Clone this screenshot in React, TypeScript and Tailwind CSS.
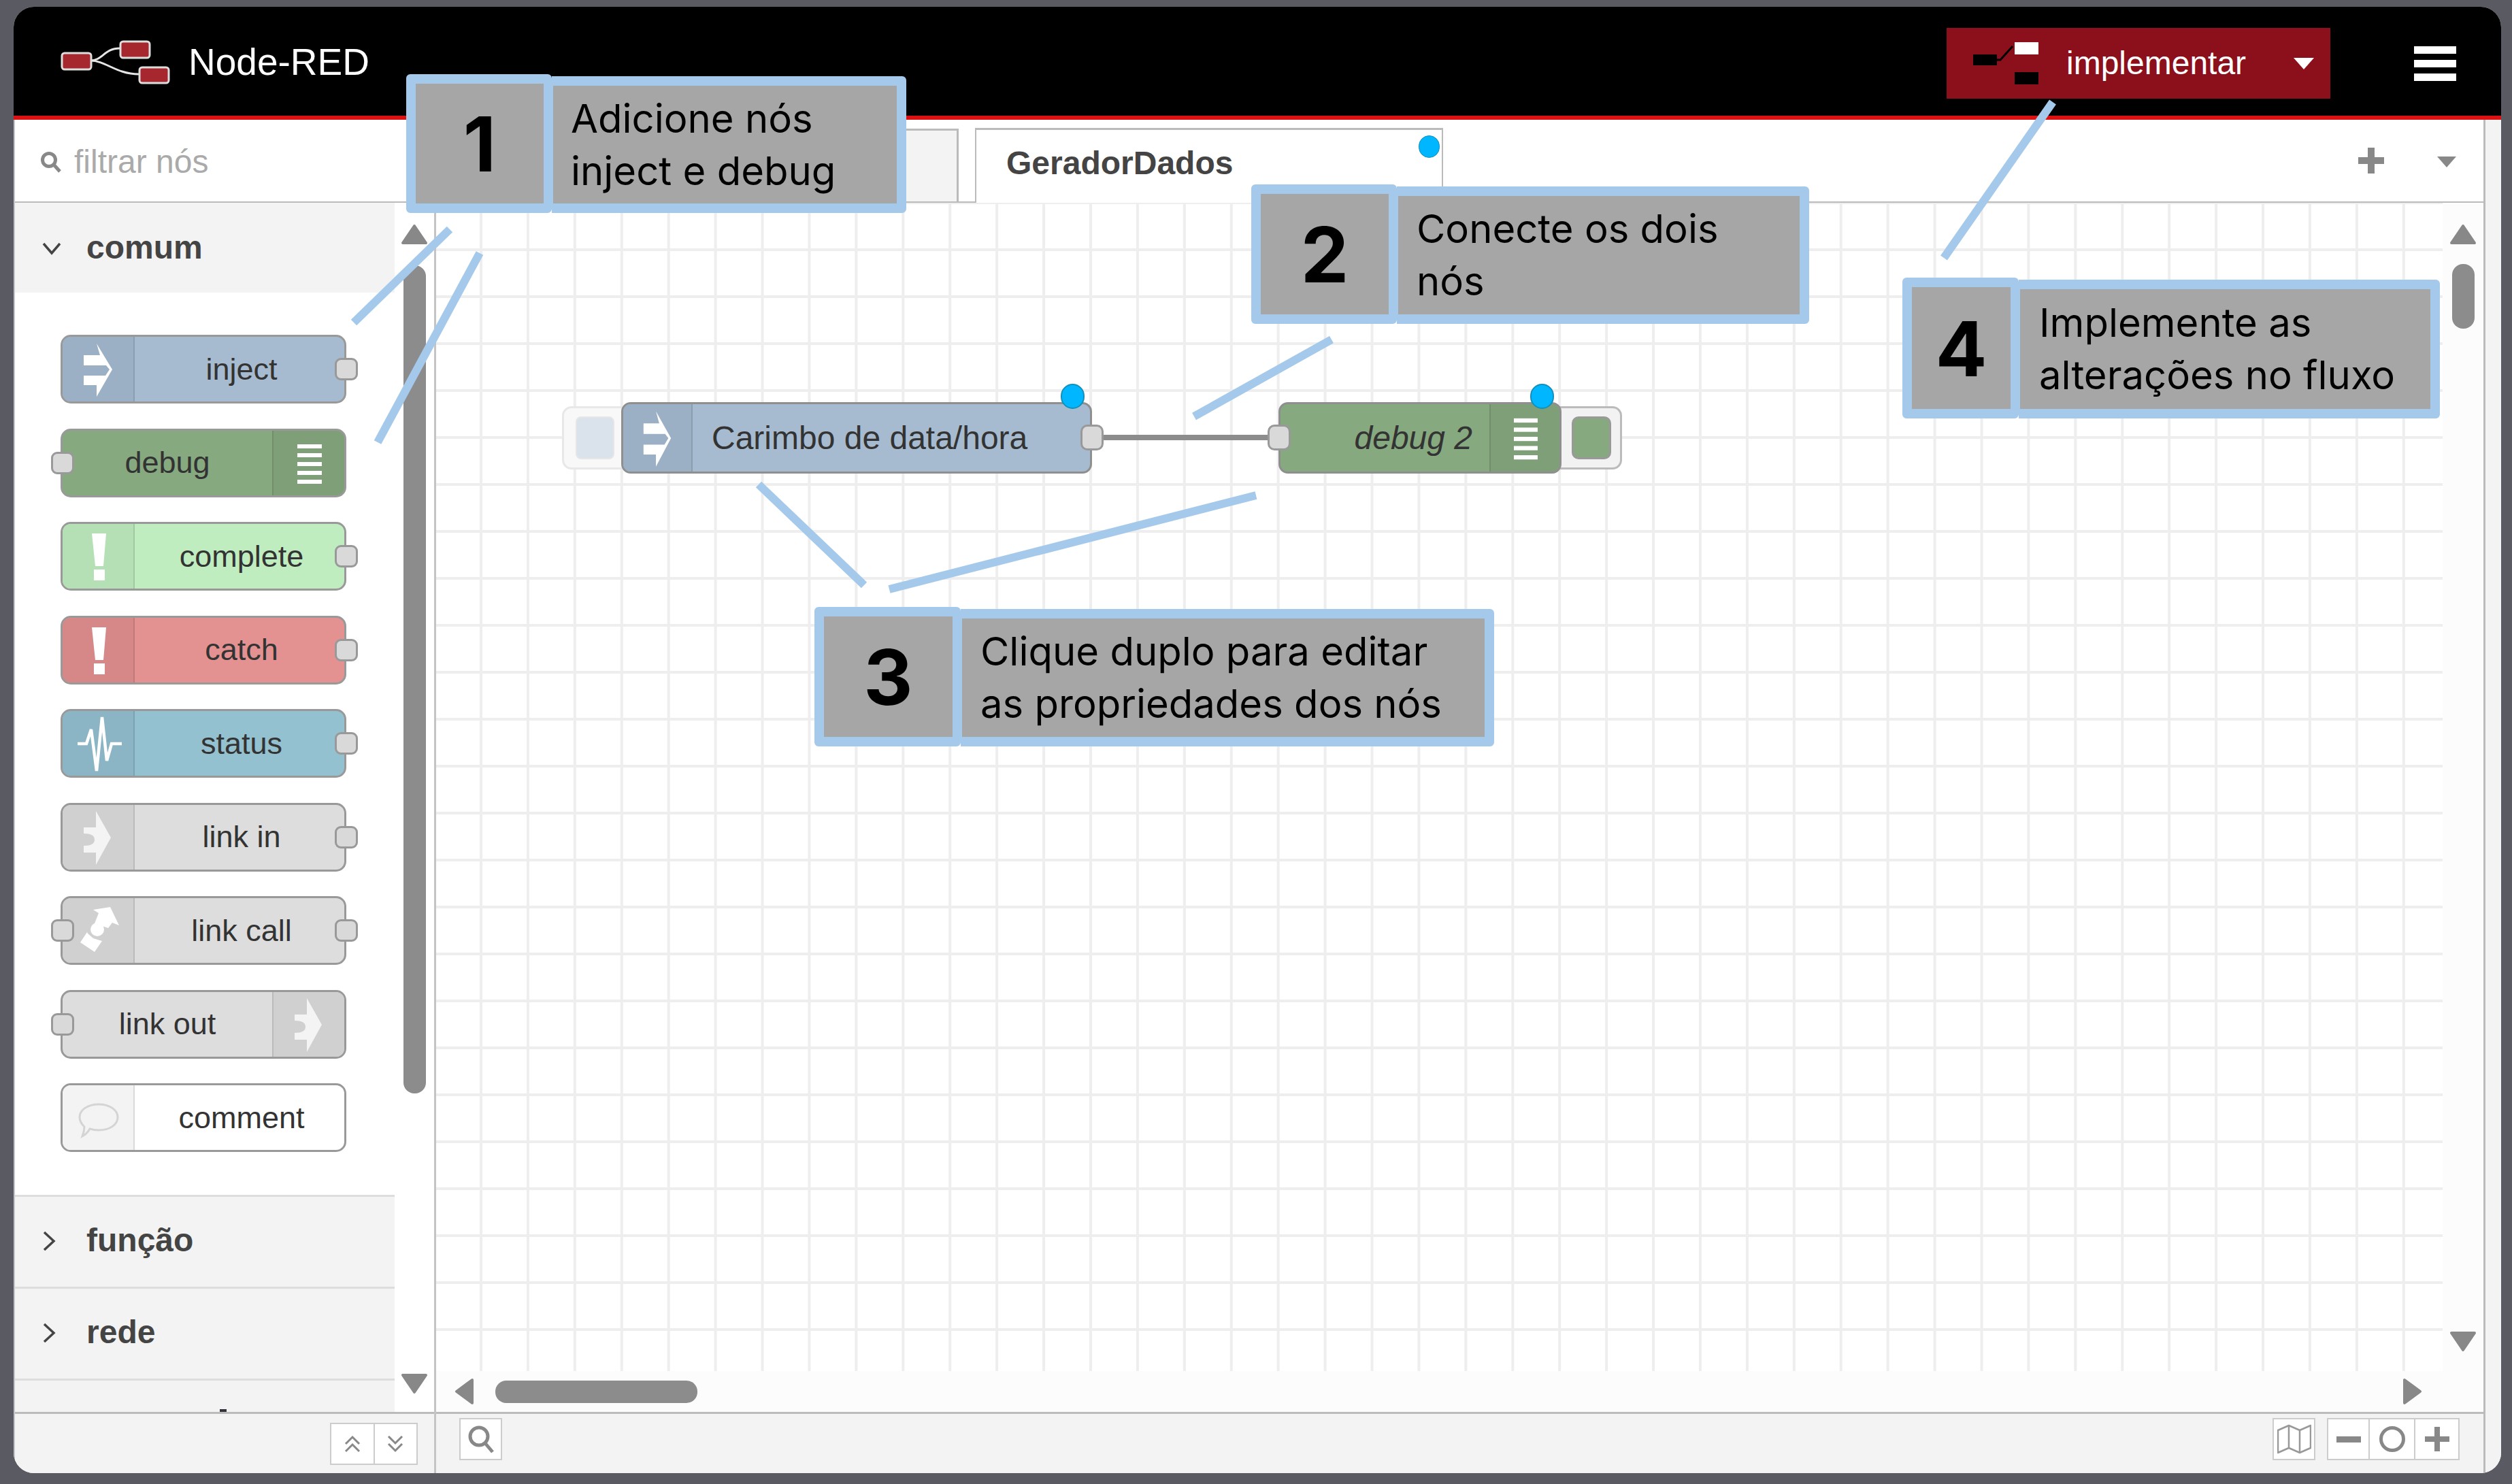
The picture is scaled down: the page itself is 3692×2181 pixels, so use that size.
import React from "react";

const ArrowIcon = ({ className }: { className?: string }) => (
  <svg viewBox="3 3 104 95" preserveAspectRatio="none" className={className}>
    <path d="M53 13 L76 51 L53 91 V74 H34 V60 H66 L72 51 L67 45 H34 V30 H58 Z" fill="#fff" />
  </svg>
);
const AlertIcon = () => (
  <svg viewBox="3 3 104 95" className="w-full h-full">
    <path d="M46 17 H67 L63 65 H51 Z" fill="#fff" />
    <rect x="49" y="70" width="16" height="16" fill="#fff" />
  </svg>
);
const WaveIcon = () => (
  <svg viewBox="3 3 104 95" className="w-full h-full">
    <polyline points="25,51 38,51 45,30 53,91 61,12 68,76 75,51 90,51" fill="none" stroke="#fff" strokeWidth="4.5" />
  </svg>
);
const LinkIcon = () => (
  <svg viewBox="3 3 104 95" className="w-full h-full">
    <path d="M52 12 L74 51 L52 91 V73 H34 V63 Q50 63 50 54 Q50 45 34 45 V36 H52 Z" fill="#f4f4f4" />
  </svg>
);
const LinkCallIcon = () => (
  <svg viewBox="3 3 104 95" className="w-full h-full">
    <polygon points="48,20 73,16 86,43 76,39 70,47 50,40 56,25" fill="#fff" />
    <circle cx="54" cy="49" r="10" fill="#fff" />
    <polygon points="39,53 29,68 50,82 61,66 48,62 40,55" fill="#fff" />
  </svg>
);
const CommentIcon = () => (
  <svg viewBox="3 3 104 95" className="w-full h-full">
    <path d="M56 31 C72 31 84 39 84 50 C84 61 72 69 56 69 C50 69 46 68 43 67 C40 72 36 76 32 78 C34 73 35 68 35 64 C31 60 28 55 28 50 C28 39 40 31 56 31 Z" fill="none" stroke="#d4d4d4" strokeWidth="3" />
  </svg>
);
const DebugIcon = ({ className }: { className?: string }) => (
  <svg viewBox="0 3 104 95" preserveAspectRatio="none" className={className}>
    {[23, 36, 49, 62, 75].map((y) => (
      <rect key={y} x="35" y={y} width="36" height="6" fill="#fff" />
    ))}
  </svg>
);

const Port = ({ className }: { className: string }) => (
  <div className={`absolute w-[34px] h-[33px] rounded-[9px] bg-[#d9d9d9] border-[3px] border-[#999999] ${className}`} />
);

const PaletteNode = ({
  label,
  color,
  iconBg,
  icon,
  right,
  inPort,
  outPort,
}: {
  label: string;
  color: string;
  iconBg: string;
  icon: React.ReactNode;
  right?: boolean;
  inPort?: boolean;
  outPort?: boolean;
}) => (
  <div className={`relative h-[101px] w-[420px] rounded-[15px] border-[3px] border-[#999999] flex ${color} ${right ? "flex-row-reverse" : ""}`}>
    <div className={`w-[106px] h-full shrink-0 ${iconBg} ${right ? "rounded-r-[12px] border-l-2" : "rounded-l-[12px] border-r-2"} border-black/10`}>{icon}</div>
    <div className={`flex-1 flex items-center justify-center text-[45px] text-[#333333] font-['Liberation_Sans',sans-serif] ${right ? "" : "pl-[6px]"}`}>{label}</div>
    {inPort && <Port className="-left-[17px] top-[31px]" />}
    {outPort && <Port className="-right-[20px] top-[31px]" />}
  </div>
);

const Chevron = ({ open }: { open?: boolean }) => (
  <svg viewBox="0 0 30 30" className="w-[30px] h-[30px] mr-[36px]">
    <polyline points={open ? "3,9 15,23 27,9" : "4,3 18,16 4,29"} fill="none" stroke="#444444" strokeWidth="3.5" />
  </svg>
);

const Category = ({ label }: { label: string }) => (
  <div className="h-[135px] shrink-0 bg-[#f3f3f3] border-t-[3px] border-[#dddddd] flex items-center pl-[39px] pb-[5px] text-[48px] font-bold text-[#444444] font-['Liberation_Sans',sans-serif]">
    <Chevron />
    {label}
  </div>
);

const Tri = ({ dir, className }: { dir: "up" | "down" | "left" | "right"; className: string }) => {
  const pts = { up: "20,3 37,28 3,28", down: "3,3 37,3 20,28", left: "26,3 26,37 3,20", right: "3,3 3,37 26,20" }[dir];
  return (
    <svg viewBox={dir === "up" || dir === "down" ? "0 0 40 31" : "0 0 29 40"} className={className}>
      <polygon points={pts} fill="#888888" stroke="#888888" strokeWidth="4" strokeLinejoin="round" />
    </svg>
  );
};

const Callout = ({
  className,
  num,
  numW,
  lines,
  pad,
}: {
  className: string;
  num: string;
  numW: string;
  lines: string[];
  pad: string;
}) => (
  <div className={`absolute flex items-end z-20 ${className}`}>
    <div className={`h-full shrink-0 bg-[#a6a6a6] border-[14px] border-r-[12px] border-[#a5c9eb] rounded-[6px] flex items-center justify-center text-[112px] font-bold text-black font-['Inter',sans-serif] ${numW}`}>
      {num}
    </div>
    <div className={`flex-1 h-[calc(100%-3px)] bg-[#a6a6a6] border-[14px] border-l-2 border-[#a5c9eb] rounded-r-[6px] flex flex-col justify-center text-[58px] leading-[77px] text-black font-['Inter',sans-serif] ${pad}`}>
      {lines.map((l) => (
        <div key={l}>{l}</div>
      ))}
    </div>
  </div>
);

export default function App() {
  return (
    <div className="relative w-[3692px] h-[2181px] overflow-hidden bg-[#5a5b62] pt-[10px] pl-[20px]">
      <div className="w-[3656px] h-[2155px] rounded-[30px] overflow-hidden bg-white flex flex-col">
        {/* Header */}
        <header className="h-[166px] shrink-0 bg-black border-b-[6px] border-[#dc1212] flex items-center pt-[6px] pl-[69px] pr-[66px]">
          <svg viewBox="0 0 164 66" className="w-[164px] h-[66px] -mt-[2px]">
            <path d="M44 30 C62 30 64 12 87 12" fill="none" stroke="#e5e5e5" strokeWidth="3" />
            <path d="M44 30 C66 30 82 50 115 50" fill="none" stroke="#e5e5e5" strokeWidth="3" />
            <rect x="2" y="19" width="43" height="24" rx="4" fill="#a6282e" stroke="#dddddd" strokeWidth="3" />
            <rect x="88" y="2" width="43" height="24" rx="4" fill="#a6282e" stroke="#dddddd" strokeWidth="3" />
            <rect x="116" y="40" width="43" height="23" rx="4" fill="#a6282e" stroke="#dddddd" strokeWidth="3" />
          </svg>
          <span className="ml-[24px] -mt-[3px] text-[55px] text-white font-['Liberation_Sans',sans-serif]">Node-RED</span>
          <div className="ml-auto w-[564px] h-[104px] bg-[#8c101c] flex items-center pl-[39px]">
            <svg viewBox="0 0 96 62" className="w-[96px] h-[62px]">
              <rect x="0" y="18" width="35" height="16" fill="#000" />
              <path d="M33 26 L40 26 L58 6" fill="none" stroke="#000" strokeWidth="3" />
              <rect x="61" y="0" width="35" height="18" fill="#fff" />
              <rect x="61" y="44" width="35" height="18" fill="#000" />
            </svg>
            <span className="ml-[41px] text-[48px] text-white font-['Liberation_Sans',sans-serif]">implementar</span>
            <svg viewBox="0 0 30 17" className="ml-[70px] w-[30px] h-[17px]">
              <polygon points="0,0 30,0 15,17" fill="#fff" />
            </svg>
          </div>
          <div className="ml-[123px] w-[62px] flex flex-col gap-[9px]">
            <div className="h-[11px] bg-white" />
            <div className="h-[11px] bg-white" />
            <div className="h-[11px] bg-white" />
          </div>
        </header>

        {/* Body */}
        <div className="flex-1 min-h-0 flex">
          {/* Palette */}
          <aside className="w-[621px] shrink-0 border-l-2 border-r-[3px] border-[#c4c4c4] flex flex-col">
            <div className="h-[122px] shrink-0 border-b-2 border-[#bbbbbb] flex items-center pl-[37px] pt-[4px] text-[48px] text-[#aaaaaa] font-['Liberation_Sans',sans-serif]">
              <svg viewBox="0 0 32 32" className="w-[32px] h-[32px] mr-[18px]">
                <circle cx="13" cy="13" r="9.5" fill="none" stroke="#888888" strokeWidth="5" />
                <line x1="20" y1="20" x2="29" y2="30" stroke="#888888" strokeWidth="5" />
              </svg>
              filtrar nós
            </div>
            <div className="flex-1 min-h-0 flex">
              <div className="w-[558px] shrink-0 flex flex-col overflow-hidden">
                <div className="h-[132px] shrink-0 bg-[#f3f3f3] flex items-center pl-[39px] text-[48px] font-bold text-[#444444] font-['Liberation_Sans',sans-serif]">
                  <Chevron open />
                  comum
                </div>
                <div className="h-[1326px] shrink-0 pt-[62px] pl-[67px] flex flex-col gap-[36.5px]">
                  <PaletteNode label="inject" color="bg-[#a6bbcf]" iconBg="bg-[#9bb0c4]" icon={<ArrowIcon className="w-full h-full" />} outPort />
                  <PaletteNode label="debug" color="bg-[#87a980]" iconBg="bg-[#7f9f78]" icon={<DebugIcon className="w-full h-full" />} right inPort />
                  <PaletteNode label="complete" color="bg-[#c0edc0]" iconBg="bg-[#b5dfb5]" icon={<AlertIcon />} outPort />
                  <PaletteNode label="catch" color="bg-[#e49191]" iconBg="bg-[#d68888]" icon={<AlertIcon />} outPort />
                  <PaletteNode label="status" color="bg-[#94c1d0]" iconBg="bg-[#8bb5c4]" icon={<WaveIcon />} outPort />
                  <PaletteNode label="link in" color="bg-[#dddddd]" iconBg="bg-[#d0d0d0]" icon={<LinkIcon />} outPort />
                  <PaletteNode label="link call" color="bg-[#dddddd]" iconBg="bg-[#d0d0d0]" icon={<LinkCallIcon />} inPort outPort />
                  <PaletteNode label="link out" color="bg-[#dddddd]" iconBg="bg-[#d0d0d0]" icon={<LinkIcon />} right inPort />
                  <PaletteNode label="comment" color="bg-white" iconBg="bg-[#f3f3f3]" icon={<CommentIcon />} />
                </div>
                <Category label="função" />
                <Category label="rede" />
                <div className="flex-1 min-h-0 bg-[#f3f3f3] border-t-[3px] border-[#dddddd] flex items-end pl-[301px]">
                  <div className="w-[10px] h-[4px] bg-[#33333d]" />
                </div>
              </div>
              <div className="flex-1 flex flex-col items-center bg-white">
                <Tri dir="up" className="w-[40px] h-[31px] mt-[31px]" />
                <div className="w-[33px] h-[1217px] mt-[30px] rounded-[16px] bg-[#8c8c8c]" />
                <Tri dir="down" className="w-[40px] h-[31px] mt-auto mb-[26px]" />
              </div>
            </div>
            <div className="h-[90px] shrink-0 border-t-[3px] border-[#bbbbbb] bg-[#f3f3f3] flex items-center justify-end pr-[24px]">
              <div className="flex w-[129px] h-[62px] bg-white border-2 border-[#cccccc]">
                <div className="flex-1 border-r-2 border-[#cccccc] flex items-center justify-center">
                  <svg viewBox="0 0 28 28" className="w-[28px] h-[28px]">
                    <polyline points="4,14 14,4 24,14" fill="none" stroke="#888888" strokeWidth="3" />
                    <polyline points="4,25 14,15 24,25" fill="none" stroke="#888888" strokeWidth="3" />
                  </svg>
                </div>
                <div className="flex-1 flex items-center justify-center">
                  <svg viewBox="0 0 28 28" className="w-[28px] h-[28px]">
                    <polyline points="4,3 14,13 24,3" fill="none" stroke="#888888" strokeWidth="3" />
                    <polyline points="4,14 14,24 24,14" fill="none" stroke="#888888" strokeWidth="3" />
                  </svg>
                </div>
              </div>
            </div>
          </aside>

          {/* Workspace */}
          <main className="flex-1 min-w-0 flex flex-col border-r-[3px] border-[#bbbbbb]">
            <div className="h-[122px] shrink-0 border-b-2 border-[#bbbbbb] flex items-end pl-[59px] pr-[40px]">
              <div className="w-[709px] h-[107px] bg-[#f3f3f3] border-t-[3px] border-r-[3px] border-[#bbbbbb]" />
              <div className="relative ml-[24px] w-[688px] h-[110px] -mb-[2px] bg-white border-t-[3px] border-x-2 border-[#bbbbbb] flex items-center pl-[44px] pb-[10px] text-[48px] font-bold text-[#444444] font-['Liberation_Sans',sans-serif]">
                GeradorDados
                <div className="absolute left-[650px] top-[8px] w-[31px] h-[33px] rounded-full bg-[#00b7ff] border border-[#1290bd]" />
              </div>
              <svg viewBox="0 0 38 38" className="ml-auto mb-[41px] w-[38px] h-[38px]">
                <rect x="14" y="0" width="10" height="38" fill="#888888" />
                <rect x="0" y="14" width="38" height="10" fill="#888888" />
              </svg>
              <svg viewBox="0 0 28 16" className="ml-[78px] mb-[50px] w-[28px] h-[16px]">
                <polygon points="0,0 28,0 14,16" fill="#888888" />
              </svg>
            </div>
            <div className="flex-1 min-h-0 flex flex-col bg-[#fcfcfc]">
              <div className="flex-1 min-h-0 flex">
                <div className="relative flex-1 min-w-0 bg-white bg-[linear-gradient(to_right,#eeeeee_4px,transparent_4px),linear-gradient(to_bottom,#eeeeee_4px,transparent_4px)] bg-[size:68.93px_69px] bg-[position:64px_-2px]">
                  {/* Left button of inject */}
                  <div className="absolute left-[185px] top-[299px] w-[102px] h-[93px] rounded-[14px] bg-[#f8f8f8] border-[3px] border-[#e8e8e8] flex items-center pl-[17px]">
                    <div className="w-[57px] h-[63px] rounded-[8px] bg-[#dae3ec] border-2 border-[#e6e6e6]" />
                  </div>
                  {/* Right button of debug */}
                  <div className="absolute left-[1630px] top-[299px] w-[113px] h-[93px] rounded-[14px] bg-[#f2f2f2] border-[3px] border-[#bbbbbb] flex items-center justify-end pr-[13px]">
                    <div className="w-[58px] h-[63px] rounded-[10px] bg-[#87a980] border-[3px] border-[#999999]" />
                  </div>
                  {/* Wire */}
                  <div className="absolute left-[980px] top-[341px] w-[242px] h-[8px] bg-[#8c8c8c]" />
                  {/* Carimbo node */}
                  <div className="absolute left-[272px] top-[293px] w-[692px] h-[105px] rounded-[14px] border-[3px] border-[#8f8f8f] bg-[#a6bbcf] flex">
                    <div className="w-[102px] h-full shrink-0 rounded-l-[11px] bg-[#9bb0c4] border-r-2 border-black/10">
                      <ArrowIcon className="w-full h-full" />
                    </div>
                    <div className="pl-[28px] flex items-center text-[48px] text-[#333333] font-['Liberation_Sans',sans-serif]">Carimbo de data/hora</div>
                    <div className="absolute -right-[20px] top-[30px] w-[34px] h-[38px] rounded-[10px] bg-[#d9d9d9] border-[3px] border-[#999999]" />
                    <div className="absolute left-[643px] -top-[30px] w-[35px] h-[37px] rounded-full bg-[#00b7ff] border-2 border-[#1290bd]" />
                  </div>
                  {/* Debug node */}
                  <div className="absolute left-[1238px] top-[293px] w-[416px] h-[105px] rounded-[14px] border-[3px] border-[#8f8f8f] bg-[#87a980] flex flex-row-reverse">
                    <div className="w-[103px] h-full shrink-0 rounded-r-[11px] bg-[#7f9f78] border-l-2 border-black/10">
                      <DebugIcon className="w-full h-full" />
                    </div>
                    <div className="pr-[25px] flex items-center text-[48px] italic text-[#333333] font-['Liberation_Sans',sans-serif]">debug 2</div>
                    <div className="absolute -left-[19px] top-[30px] w-[34px] h-[38px] rounded-[10px] bg-[#d9d9d9] border-[3px] border-[#999999]" />
                    <div className="absolute left-[367px] -top-[30px] w-[35px] h-[37px] rounded-full bg-[#00b7ff] border-2 border-[#1290bd]" />
                  </div>
                </div>
                <div className="w-[60px] shrink-0 flex flex-col items-center">
                  <Tri dir="up" className="w-[40px] h-[31px] mt-[31px]" />
                  <div className="w-[33px] h-[95px] mt-[28px] rounded-[16px] bg-[#8c8c8c]" />
                  <Tri dir="down" className="w-[40px] h-[31px] mt-auto mb-[28px]" />
                </div>
              </div>
              <div className="h-[60px] shrink-0 flex items-center pl-[27px] pr-[90px]">
                <Tri dir="left" className="w-[29px] h-[40px]" />
                <div className="ml-[31px] w-[297px] h-[33px] rounded-[16px] bg-[#8c8c8c]" />
                <Tri dir="right" className="ml-auto w-[29px] h-[40px]" />
              </div>
            </div>
            <div className="h-[90px] shrink-0 border-t-[3px] border-[#bbbbbb] bg-[#f3f3f3] flex items-start pt-[6px] pl-[34px] pr-[35px]">
              <div className="w-[63px] h-[62px] bg-white border-2 border-[#cccccc] flex items-center justify-center">
                <svg viewBox="0 0 42 42" className="w-[42px] h-[42px]">
                  <circle cx="18" cy="17" r="13" fill="none" stroke="#888888" strokeWidth="5" />
                  <line x1="27" y1="27" x2="38" y2="40" stroke="#888888" strokeWidth="5" />
                </svg>
              </div>
              <div className="ml-auto w-[63px] h-[62px] bg-white border-2 border-[#cccccc] flex items-center justify-center">
                <svg viewBox="0 0 50 44" className="w-[50px] h-[44px]">
                  <path d="M1 9 L17 2 L33 9 L49 2 V35 L33 42 L17 35 L1 42 Z M17 2 V35 M33 9 V42" fill="none" stroke="#999999" strokeWidth="2.5" strokeLinejoin="round" />
                </svg>
              </div>
              <div className="ml-[17px] flex w-[195px] h-[62px] bg-white border-2 border-[#cccccc]">
                <div className="w-[61px] border-r-2 border-[#cccccc] flex items-center justify-center">
                  <div className="w-[36px] h-[9px] bg-[#888888]" />
                </div>
                <div className="w-[67px] border-r-2 border-[#cccccc] flex items-center justify-center">
                  <div className="w-[38px] h-[38px] rounded-full border-[5px] border-[#888888]" />
                </div>
                <div className="flex-1 flex items-center justify-center">
                  <svg viewBox="0 0 36 36" className="w-[36px] h-[36px]">
                    <rect x="14" y="0" width="8" height="36" fill="#888888" />
                    <rect x="0" y="14" width="36" height="8" fill="#888888" />
                  </svg>
                </div>
              </div>
            </div>
          </main>
          <div className="w-[23px] shrink-0 bg-[#f3f3f3]" />
        </div>
      </div>

      {/* Callout leader lines */}
      <svg viewBox="0 0 3692 2181" className="absolute inset-0 w-[3692px] h-[2181px] z-10 pointer-events-none">
        <g stroke="#a5c9eb" strokeWidth="12" fill="none">
          <line x1="661" y1="337" x2="520" y2="474" />
          <line x1="705" y1="372" x2="555" y2="650" />
          <line x1="1115" y1="712" x2="1270" y2="860" />
          <line x1="1846" y1="728" x2="1307" y2="866" />
          <line x1="1957" y1="499" x2="1755" y2="612" />
          <line x1="3017" y1="150" x2="2857" y2="379" />
        </g>
      </svg>

      <Callout className="left-[597px] top-[109px] w-[735px] h-[204px]" num="1" numW="w-[214px]" lines={["Adicione nós", "inject e debug"]} pad="pl-[26px]" />
      <Callout className="left-[1839px] top-[271px] w-[820px] h-[205px]" num="2" numW="w-[214px]" lines={["Conecte os dois", "nós"]} pad="pl-[27px]" />
      <Callout className="left-[1197px] top-[892px] w-[999px] h-[205px]" num="3" numW="w-[215px]" lines={["Clique duplo para editar", "as propriedades dos nós"]} pad="pl-[27px]" />
      <Callout className="left-[2796px] top-[408px] w-[790px] h-[207px]" num="4" numW="w-[171px]" lines={["Implemente as", "alterações no fluxo"]} pad="pl-[28px]" />
    </div>
  );
}
